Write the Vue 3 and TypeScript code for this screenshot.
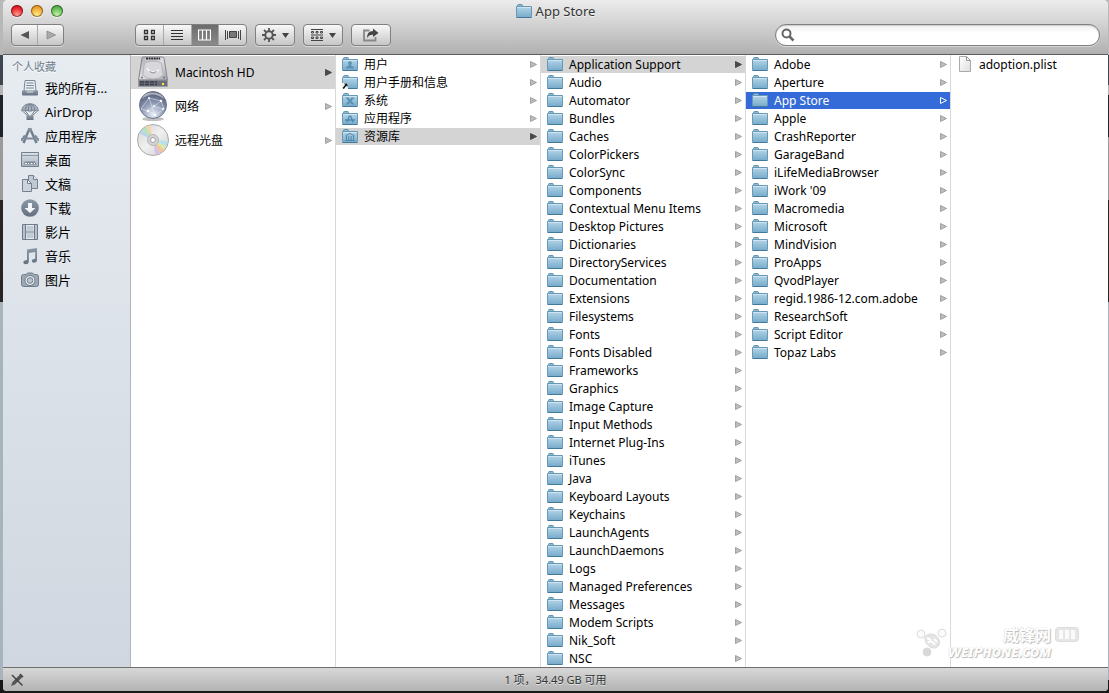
<script setup lang="ts">
import { ref } from 'vue'

interface Entry {
  name: string
  icon: string
  leaf?: boolean
}
interface Column {
  id: string
  large?: boolean
  selected?: string
  active?: boolean
  entries: Entry[]
}

const folders = (names: string[]): Entry[] => names.map((name) => ({ name, icon: 'folder' }))

const favourites: Entry[] = [
  { name: '我的所有…', icon: 'allfiles' },
  { name: 'AirDrop', icon: 'airdrop' },
  { name: '应用程序', icon: 'apps' },
  { name: '桌面', icon: 'desktop' },
  { name: '文稿', icon: 'documents' },
  { name: '下载', icon: 'downloads' },
  { name: '影片', icon: 'movies' },
  { name: '音乐', icon: 'music' },
  { name: '图片', icon: 'pictures' },
]

const columns = ref<Column[]>([
  {
    id: 'devices',
    large: true,
    selected: 'Macintosh HD',
    entries: [
      { name: 'Macintosh HD', icon: 'drive' },
      { name: '网络', icon: 'network' },
      { name: '远程光盘', icon: 'disc' },
    ],
  },
  {
    id: 'root',
    selected: '资源库',
    entries: [
      { name: '用户', icon: 'folder-user' },
      { name: '用户手册和信息', icon: 'folder-alias' },
      { name: '系统', icon: 'folder-system' },
      { name: '应用程序', icon: 'folder-apps' },
      { name: '资源库', icon: 'folder-library' },
    ],
  },
  {
    id: 'library',
    selected: 'Application Support',
    entries: folders([
      'Application Support', 'Audio', 'Automator', 'Bundles', 'Caches', 'ColorPickers', 'ColorSync',
      'Components', 'Contextual Menu Items', 'Desktop Pictures', 'Dictionaries', 'DirectoryServices',
      'Documentation', 'Extensions', 'Filesystems', 'Fonts', 'Fonts Disabled', 'Frameworks', 'Graphics',
      'Image Capture', 'Input Methods', 'Internet Plug-Ins', 'iTunes', 'Java', 'Keyboard Layouts',
      'Keychains', 'LaunchAgents', 'LaunchDaemons', 'Logs', 'Managed Preferences', 'Messages',
      'Modem Scripts', 'Nik_Soft', 'NSC',
    ]),
  },
  {
    id: 'support',
    selected: 'App Store',
    active: true,
    entries: folders([
      'Adobe', 'Aperture', 'App Store', 'Apple', 'CrashReporter', 'GarageBand', 'iLifeMediaBrowser',
      "iWork '09", 'Macromedia', 'Microsoft', 'MindVision', 'ProApps', 'QvodPlayer',
      'regid.1986-12.com.adobe', 'ResearchSoft', 'Script Editor', 'Topaz Labs',
    ]),
  },
  { id: 'store', entries: [{ name: 'adoption.plist', icon: 'file', leaf: true }] },
])

const query = ref('')
const select = (column: Column, entry: Entry) => {
  column.selected = entry.name
}
</script>

<template>
  <div class="screen">
    <svg class="defs" aria-hidden="true">
      <defs>
        <linearGradient id="g-folder" x1="0" y1="0" x2="0" y2="1">
          <stop offset="0" stop-color="#b4d5e7" /><stop offset="1" stop-color="#76aaca" />
        </linearGradient>
        <linearGradient id="g-side" x1="0" y1="0" x2="0" y2="1">
          <stop offset="0" stop-color="#8d98a6" /><stop offset="1" stop-color="#647080" />
        </linearGradient>
        <linearGradient id="g-pale" x1="0" y1="0" x2="0" y2="1">
          <stop offset="0" stop-color="#dbe1e8" /><stop offset="1" stop-color="#a9b3bf" />
        </linearGradient>
        <linearGradient id="g-metal" x1="0" y1="0" x2="1" y2="1">
          <stop offset="0" stop-color="#a9a9ae" /><stop offset="0.5" stop-color="#e0e0e4" /><stop offset="1" stop-color="#a2a2aa" />
        </linearGradient>
        <radialGradient id="g-globe" cx="0.5" cy="0.85" r="0.85">
          <stop offset="0" stop-color="#e4edf6" /><stop offset="0.5" stop-color="#8f9bb6" /><stop offset="1" stop-color="#4b526c" />
        </radialGradient>
        <linearGradient id="g-disc" x1="0" y1="0" x2="1" y2="1">
          <stop offset="0" stop-color="#d5d5d5" /><stop offset="0.5" stop-color="#f0f0f0" /><stop offset="1" stop-color="#cccccc" />
        </linearGradient>
        <linearGradient id="g-page" x1="0" y1="0" x2="1" y2="1">
          <stop offset="0" stop-color="#ffffff" /><stop offset="1" stop-color="#dedede" />
        </linearGradient>
      </defs>

      <symbol id="folder" viewBox="0 0 16 16">
        <path d="M1.5 4V2.5q0-1 1-1h3q1 0 1 1V4" fill="#8dbad3" stroke="#5f91b0" />
        <path d="M0.5 3.5h15v10q0 1-1 1h-13q-1 0-1-1z" fill="url(#g-folder)" stroke="#6798b5" />
        <path d="M1 4.5h14" stroke="#cfe6f2" />
        <path d="M0.5 14.5h15" stroke="#437a9a" />
      </symbol>
      <symbol id="folder-user" viewBox="0 0 16 16">
        <use href="#folder" />
        <path d="M8 5.2c1.4 0 2 1 1.8 2.3-.1.9-.5 1.4-.9 1.8.2 1 3.1.9 3.1 3.1H4c0-2.2 2.900-2.1 3.1-3.1-.4-.4-.8-.9-.9-1.8C6 6.200 6.600 5.200 8 5.200z" fill="#5a92b5" />
      </symbol>
      <symbol id="folder-alias" viewBox="0 0 16 16">
        <use href="#folder" />
        <path d="M0 9h6v6H0z" fill="#e8f2f7" />
        <path d="M2 9.500h3.500V13l-1.200-1.200L1.800 15 .6 14l2.600-3.200z" fill="#111" />
      </symbol>
      <symbol id="folder-system" viewBox="0 0 16 16">
        <use href="#folder" />
        <path d="M3.500 5.500h3L8 7.500l1.500-2h3L9.500 9l3 3.500h-3L8 10.500l-1.500 2h-3l3-3.500z" fill="#5a92b5" />
      </symbol>
      <symbol id="folder-apps" viewBox="0 0 16 16">
        <use href="#folder" />
        <path d="M7.500 5.500L5 12.500M8.500 5.500l2.500 7M3 10h10" fill="none" stroke="#5089ad" stroke-width="1.300" />
      </symbol>
      <symbol id="folder-library" viewBox="0 0 16 16">
        <use href="#folder" />
        <path d="M3.500 7.800L8 5.500l4.500 2.300M3 12.500h10M4.500 8v4M6.800 8v4M9.200 8v4M11.500 8v4" fill="none" stroke="#5089ad" />
      </symbol>
      <symbol id="file" viewBox="0 0 16 16">
        <path d="M2.500.5h7l4 4v11h-11z" fill="url(#g-page)" stroke="#aaaaaa" />
        <path d="M9.500.5v4h4z" fill="#f8f8f8" stroke="#979797" />
      </symbol>

      <symbol id="drive" viewBox="0 0 32 32">
        <path d="M5 2q.3-1 1.500-1h19q1.200 0 1.500 1l3.500 22H1.500z" fill="url(#g-metal)" stroke="#85858b" />
        <path d="M8 1.500h16v3H8z" fill="#c9c9cc" />
        <path d="M9 2.500h14" stroke="#303034" stroke-width="2" stroke-dasharray="2 .6" />
        <path d="M7.500 7q8.500-4 17 0l1.800 12q-4 4-10.300 4T5.700 19z" fill="#d7d7dc" stroke="#b2b2b8" />
        <path d="M10 12q3 7 12 2" fill="none" stroke="#f5f5f7" stroke-width="1.500" />
        <path d="M12.500 15.500q3.500 3 7 0" fill="none" stroke="#8c8c94" />
        <circle cx="5" cy="21.500" r="1" fill="#777" /><circle cx="27" cy="21.500" r="1" fill="#777" />
        <path d="M1.500 24h29v6.500h-29z" fill="#6a6c78" stroke="#9a9ca4" />
        <path d="M3 26h17M3 28.500h17" stroke="#3d3f4b" stroke-width="1.500" stroke-dasharray="4 1" />
        <circle cx="26" cy="28" r="1.200" fill="#ffe34a" />
      </symbol>
      <symbol id="network" viewBox="0 0 32 32">
        <ellipse cx="16" cy="29" rx="11" ry="2" fill="#000" opacity=".25" />
        <circle cx="16" cy="15" r="13.500" fill="url(#g-globe)" stroke="#6d758e" />
        <path d="M5 9q11-9 22 0-2-6-11-6.500T5 9z" fill="#fff" opacity=".5" />
        <path d="M4 19L12 8l12 3 3 8-9 6-7-4zM12 8l6 17M24 11L11 21M18 17l9 2" fill="none" stroke="#eef3fb" stroke-width=".5" />
        <g fill="#fff"><circle cx="12" cy="8" r="1" /><circle cx="24" cy="11" r="1.200" /><circle cx="11" cy="21" r="1.300" /><circle cx="18" cy="25" r="1.200" /><circle cx="17" cy="16" r="1" /><circle cx="26" cy="19" r="1" /></g>
      </symbol>
      <symbol id="disc" viewBox="0 0 32 32">
        <circle cx="16" cy="16" r="15.500" fill="url(#g-disc)" stroke="#a9a9a9" />
        <path d="M16 16L5 6l4-3.500z" fill="#b6e3bd" /><path d="M16 16L9 2.500l4-1.500z" fill="#f5d5a8" />
        <path d="M16 16L2.500 9.500 5 6z" fill="#b9d4ee" /><path d="M16 16l11 10-4 3.500z" fill="#f5c49b" />
        <path d="M16 16l13.500 6-2.500 4z" fill="#d8eaaa" /><path d="M16 16l15 1-1.500 5z" fill="#b8dfee" />
        <path d="M16 16l7 13.500-4.500 1.500z" fill="#d4c1ea" />
        <circle cx="16" cy="16" r="5.500" fill="#d5d5d7" stroke="#b5b5b8" />
        <circle cx="16" cy="16" r="2.500" fill="#fff" stroke="#a0a0a0" />
      </symbol>

      <symbol id="allfiles" viewBox="0 0 18 18">
        <path d="M4 1.500h10L15 12H3z" fill="#e9edf1" stroke="#7d8997" />
        <path d="M5.500 4h7M5.200 6.500h7.600M5 9h8" stroke="#7d8997" />
        <path d="M1 11.500h4l1 2h6l1-2h4v4q0 1-1 1H2q-1 0-1-1z" fill="url(#g-side)" />
      </symbol>
      <symbol id="airdrop" viewBox="0 0 18 18">
        <path d="M.8 8C.8 3 5 .8 9 .8S17.200 3 17.200 8q-1.500-1.500-3.200 0-2-1.500-3.300 0H7.300Q6 6.500 4 8 2.300 6.500.8 8z" fill="#a7b1bd" stroke="#758291" />
        <path d="M7.300 8Q7 3 9 1q2 2 1.700 7M4 8Q4 3 8 1M14 8q0-5-4-7M1.500 8L7 13M4.500 8L8 13M13.500 8L10 13M16.500 8L11 13" fill="none" stroke="#758291" />
        <path d="M5.500 12.500h7v4.500h-7z" fill="url(#g-side)" />
      </symbol>
      <symbol id="apps" viewBox="0 0 18 18">
        <path d="M8.500 1.500L2.500 16M9 1.500L15.500 16" fill="none" stroke="#737f8e" stroke-width="2.500" />
        <path d="M1 11.500h16M1 11v3M17 11v3M4 8.500l-2 2M14 8.500l2 2" fill="none" stroke="#7f8b99" stroke-width="1.800" />
        <circle cx="9" cy="2.500" r="1.800" fill="#8994a2" />
      </symbol>
      <symbol id="desktop" viewBox="0 0 18 18">
        <path d="M.5 1.500h17v14H.5z" fill="url(#g-pale)" stroke="#737f8d" />
        <path d="M.5 4.500h17" stroke="#8c97a4" />
        <path d="M2.500 13.500l1.500-3h10l1.500 3z" fill="#7c8795" />
        <path d="M4 12.500h2M7 12.500h1M9.500 12.500h2M13 12.500h1" stroke="#fff" />
      </symbol>
      <symbol id="documents" viewBox="0 0 18 18">
        <path d="M7.500.5h5l4 4v9h-9z" fill="#c0c8d1" stroke="#738090" />
        <path d="M12.500.5v4h4" fill="#e9eef4" stroke="#738090" />
        <path d="M1.500 4.500h5l4 4v8h-9z" fill="#ccd3dc" stroke="#738090" />
        <path d="M6.500 4.500v4h4z" fill="#eef2f5" stroke="#738090" />
      </symbol>
      <symbol id="downloads" viewBox="0 0 18 18">
        <circle cx="9" cy="9" r="8.800" fill="url(#g-side)" />
        <path d="M7 4h4v5h3.500L9 14 3.500 9H7z" fill="#f3f6f9" />
      </symbol>
      <symbol id="movies" viewBox="0 0 18 18">
        <path d="M1.500 1.500h15v15h-15z" fill="#e7ecf2" stroke="#6f7c8b" />
        <path d="M4.500 2v14M13.500 2v14M5 9h8" stroke="#6f7c8b" />
        <path d="M3 2.500V16M15 2.500V16" stroke="#6f7c8b" stroke-dasharray="1 1" stroke-width="1.500" />
        <path d="M5.500 3h7v5h-7zM5.500 10h7v5h-7z" fill="#c3cbd5" />
      </symbol>
      <symbol id="music" viewBox="0 0 18 18">
        <path d="M6 2.500L16 1v12q0 2.500-3 2.700-2.200 0-2.200-1.700 0-2 3.400-2.300V5L7.800 6v8.500q0 2.500-3 2.700-2.500 0-2.500-1.800 0-2 3.700-2.300z" fill="url(#g-side)" />
      </symbol>
      <symbol id="pictures" viewBox="0 0 18 18">
        <path d="M5 3.500L6.500 2h5L13 3.500h2.500q2 .2 2 2v8q0 2-2 2h-13q-2 0-2-2v-8q0-1.800 2-2z" fill="#9ca7b4" stroke="#717d8b" />
        <circle cx="9" cy="9.500" r="5" fill="#e5eaf0" stroke="#6f7b89" />
        <circle cx="9" cy="9.500" r="2.800" fill="#bcc5cf" stroke="#717d8b" />
      </symbol>
    </svg>

    <main class="window">
      <header class="header">
        <div class="titlebar">
          <div class="lights">
            <button class="light red" aria-label="关闭"></button>
            <button class="light amber" aria-label="最小化"></button>
            <button class="light green" aria-label="缩放"></button>
          </div>
          <h1 class="title"><svg class="icon16"><use href="#folder" /></svg>App Store</h1>
        </div>
        <div class="toolbar">
          <div class="group nav">
            <button aria-label="后退"><svg width="10" height="10"><path d="M9 1v8L.5 5z" fill="#555" /></svg></button>
            <button aria-label="前进"><svg width="10" height="10"><path d="M1 1v8L9.500 5z" fill="#aaa" stroke="#888" stroke-width=".8" /></svg></button>
          </div>
          <div class="group views">
            <button aria-label="图标">
              <svg width="12" height="12" fill="none" stroke="#333"><path d="M1.500 1.500h3v3h-3zM8.500 1.500h3v3h-3zM1.500 7.500h3v3h-3zM8.500 7.500h3v3h-3z" stroke-width="1.300" /></svg>
            </button>
            <button aria-label="列表">
              <svg width="12" height="12" stroke="#333"><path d="M0 1.500h12M0 4.500h12M0 7.500h12M0 10.500h12" /></svg>
            </button>
            <button class="on" aria-label="分栏" aria-pressed="true">
              <svg width="13" height="12" fill="none" stroke="#fff"><path d="M.5 1h12v10H.5zM4.500 1v10M8.500 1v10" stroke-width="1.200" /></svg>
            </button>
            <button aria-label="Cover Flow">
              <svg width="16" height="12"><path d="M4.500 2.500h7v6h-7z" fill="#777" stroke="#444" /><path d="M.5 1v10M2.500 2v8M13.500 2v8M15.500 1v10" stroke="#444" /></svg>
            </button>
          </div>
          <button class="tool" aria-label="操作">
            <svg width="14" height="14" viewBox="0 0 14 14"><g stroke="#555" fill="none"><circle cx="7" cy="7" r="3.700" stroke-width="2" /><path d="M7 0v3M7 11v3M0 7h3M11 7h3M2 2l2.200 2.200M9.800 9.800L12 12M12 2L9.800 4.200M4.200 9.800L2 12" stroke-width="1.800" /></g></svg>
            <svg width="7" height="5"><path d="M0 0h7L3.500 5z" fill="#444" /></svg>
          </button>
          <button class="tool" aria-label="排列">
            <svg width="12" height="12" fill="none" stroke="#444"><path d="M0 .5h12M0 6h12M0 11.500h12" /><path d="M.5 2.500h2v1.500h-2zM5 2.500h2v1.500H5zM9.500 2.500h2v1.500h-2zM.5 8h2v1.500h-2zM5 8h2v1.500H5zM9.500 8h2v1.500h-2z" /></svg>
            <svg width="7" height="5"><path d="M0 0h7L3.500 5z" fill="#444" /></svg>
          </button>
          <button class="tool" aria-label="共享">
            <svg width="16" height="14"><path d="M6.500 2.500H1v10h11.500V9" fill="none" stroke="#888" stroke-width="1.800" /><path d="M10 .5L15.500 5 10 9V6.700Q6 6.300 4 10 4 3.200 10 3z" fill="#444" /></svg>
          </button>
          <label class="search">
            <svg width="14" height="14"><circle cx="5.500" cy="5.500" r="4" fill="none" stroke="#666" stroke-width="2" /><path d="M8.500 8.500L12.500 12.500" stroke="#666" stroke-width="2.500" /></svg>
            <input v-model="query" type="text" aria-label="搜索" />
          </label>
        </div>
      </header>

      <div class="body">
        <nav class="sidebar">
          <h2>个人收藏</h2>
          <a v-for="item in favourites" :key="item.name" href="#" @click.prevent>
            <svg class="icon18"><use :href="'#' + item.icon" /></svg>{{ item.name }}
          </a>
        </nav>
        <ul v-for="column in columns" :key="column.id" class="column" :class="{ large: column.large, active: column.active }">
          <li v-for="entry in column.entries" :key="entry.name">
            <button class="row" :class="{ selected: column.selected === entry.name }" @click="select(column, entry)">
              <svg :class="column.large ? 'icon32' : 'icon16'"><use :href="'#' + entry.icon" /></svg>
              <span class="name">{{ entry.name }}</span>
              <svg v-if="!entry.leaf" class="arrow" width="7" height="7"><path d="M.5.5v6l6-3z" /></svg>
            </button>
          </li>
        </ul>
      </div>

      <footer class="status">
        <svg class="pencil" width="14" height="14">
          <path d="M1 13l1.500-4L10 1.500 12.500 4 5 11.500z" fill="#555" /><path d="M10 1l3 3" stroke="#444" stroke-width="1.500" />
          <path d="M2 2l10.500 10.500" stroke="#444" stroke-width="1.500" />
        </svg>
        <span>1 项，34.49 GB 可用</span>
      </footer>
    </main>

    <div class="watermark">
      <svg width="32" height="30" viewBox="0 0 32 30" fill="#fbfbfb" stroke="#dcdcdc">
        <circle cx="5" cy="6" r="4" /><circle cx="26" cy="5" r="4" /><circle cx="11" cy="24" r="4" fill="#d8d8d8" />
        <path d="M9 9q4-5 10-2 6 4 4 10-3 5-9 2-6-4-5-10z" fill="#e4e4e4" />
        <path d="M11 10l4 2M18 11l3 3M12 15q3-4 7 2" fill="none" stroke="#fff" stroke-width="2" />
      </svg>
      <div class="brand">
        <p class="cn">威锋网</p>
        <p class="en">WeiPhone.com</p>
      </div>
      <svg class="badge" width="24" height="15"><rect x=".5" y=".5" width="23" height="14" rx="3" fill="#e6e6e6" stroke="#dcdcdc" /><path d="M4 3h4v9H4zM10 3h4v9h-4zM16 3h4v9h-4z" fill="#fafafa" /></svg>
    </div>
  </div>
</template>

<style>
html,
body {
  margin: 0;
  overflow: hidden;
}
</style>

<style scoped>
.screen {
  box-sizing: border-box;
  position: relative;
  height: 100vh;
  padding: 0 1px 2px 3px;
  background: linear-gradient(#b8b8b8 0 55px, #3e4650 55px 85px, #b4b4b4 85px 95px, #20242a 95px 137px, #9a9a9a 137px 200px, #282624 200px 302px, #a8b4bc 302px 680px, #181818 680px);
  font: 12px/18px "Noto Sans", "Noto Sans CJK SC", sans-serif;
  color: #000;
}
.defs {
  position: absolute;
  width: 0;
  height: 0;
}
svg {
  display: block;
  flex: none;
}
button {
  padding: 0;
  border: 0;
  background: none;
  font: inherit;
  color: inherit;
}
h1,
h2,
p,
ul {
  margin: 0;
  padding: 0;
  font-weight: normal;
  list-style: none;
}
.icon16 {
  width: 16px;
  height: 16px;
}
.icon18 {
  width: 18px;
  height: 18px;
}
.icon32 {
  width: 32px;
  height: 32px;
}
.row .icon16,
.row .icon32 {
  margin-bottom: 1px;
}
.window {
  display: flex;
  flex-direction: column;
  height: 100%;
  overflow: hidden;
  border-radius: 5px 5px 4px 4px;
  background: #fff;
}
.header {
  border-bottom: 1px solid #5c5c5c;
  background: linear-gradient(#ececec, #d2d2d2 45%, #b0b0b0);
}
.titlebar {
  display: grid;
  grid-template-columns: 1fr auto 1fr;
  align-items: center;
  height: 22px;
}
.lights {
  display: flex;
  gap: 8px;
  padding-left: 8px;
}
.light {
  width: 12px;
  height: 12px;
  border-radius: 50%;
  box-shadow: inset 0 0 0 1px rgba(0, 0, 0, 0.4), 0 1px 0 #f4f4f4;
}
.red {
  background: radial-gradient(circle at 50% 80%, #ff9c90, #e8202a 60%, #b8101c);
}
.amber {
  background: radial-gradient(circle at 50% 80%, #ffec86, #efa42e 60%, #c97818);
}
.green {
  background: radial-gradient(circle at 50% 80%, #c4f2a4, #5fb850 60%, #358a34);
}
.title {
  display: flex;
  align-items: center;
  gap: 4px;
  font-size: 13px;
  color: #333;
  text-shadow: 0 1px 0 #f4f4f4;
}
.toolbar {
  display: flex;
  height: 22px;
  padding: 2px 8px 8px;
}
.group,
.tool,
.search {
  box-sizing: border-box;
  display: flex;
  border: 1px solid #808080;
  border-radius: 4px;
  background: linear-gradient(#f8f8f8, #c6c6c6);
  box-shadow: 0 1px 0 #d8d8d8;
}
.group button {
  display: flex;
  flex: 1;
  align-items: center;
  justify-content: center;
}
.group button + button {
  border-left: 1px solid #a8a8a8;
}
.nav {
  width: 53px;
}
.views {
  width: 112px;
  margin-left: 71px;
}
.views .on {
  background: linear-gradient(#6c6c6c, #8a8a8a);
}
.tool {
  align-items: center;
  justify-content: center;
  gap: 6px;
  width: 40px;
  margin-left: 8px;
}
.search {
  align-items: center;
  gap: 4px;
  width: 325px;
  margin-left: auto;
  padding: 0 5px;
  border-radius: 11px;
  background: linear-gradient(#f0f0f0, #fff 40%);
  box-shadow: inset 0 1px 1px #ccc, 0 1px 0 #d8d8d8;
}
.search input {
  flex: 1;
  min-width: 0;
  border: 0;
  outline: 0;
  background: none;
  font: inherit;
}
.body {
  display: flex;
  flex: 1;
  min-height: 0;
}
.sidebar {
  box-sizing: border-box;
  flex: none;
  width: 128px;
  padding-top: 3px;
  border-right: 1px solid #b4b4b4;
  background: linear-gradient(#e7ecf1, #d0d7e0);
}
.sidebar h2 {
  padding-left: 9px;
  font-size: 11px;
  color: #6e7d8c;
  text-shadow: 0 1px 0 #fff;
}
.sidebar a {
  display: flex;
  align-items: center;
  gap: 6px;
  height: 24px;
  padding-left: 18px;
  font-size: 13px;
  color: #000;
  text-decoration: none;
  white-space: nowrap;
}
.column {
  box-sizing: border-box;
  flex: none;
  width: 205px;
  padding-top: 1px;
  overflow: hidden;
  border-right: 1px solid #d9d9d9;
}
.column:last-child {
  flex: 1;
  border-right: 0;
}
.column li {
  padding-bottom: 1px;
}
.row {
  box-sizing: border-box;
  display: flex;
  align-items: center;
  gap: 6px;
  width: 100%;
  height: 17px;
  padding: 0 3px 0 6px;
  text-align: left;
  white-space: nowrap;
}
.large .row {
  height: 33px;
}
.name {
  flex: 1;
}
.selected {
  background: #d4d4d4;
}
.arrow {
  fill: #bcbcbc;
  stroke: #a2a2a2;
}
.selected .arrow {
  fill: #4a4a4a;
  stroke: #4a4a4a;
}
.active .selected {
  background: #356bd8;
  color: #fff;
}
.active .selected .arrow {
  fill: none;
  stroke: #fff;
}
.status {
  display: grid;
  grid-template-columns: 1fr auto 1fr;
  align-items: center;
  height: 23px;
  border-top: 1px solid #6e6e6e;
  background: linear-gradient(#d8d8d8, #b2b2b2);
  font-size: 11px;
  color: #333;
  text-shadow: 0 1px 0 #e4e4e4;
}
.pencil {
  margin-left: 7px;
}
.watermark {
  position: absolute;
  right: 30px;
  bottom: 34px;
  display: flex;
  align-items: center;
  color: #fff;
  text-shadow: 0 0 1px #bbb, 1px 1px 1px #bbb;
  pointer-events: none;
}
.cn {
  font-size: 16px;
  line-height: 16px;
  font-weight: bold;
  text-align: right;
}
.en {
  font: italic bold small-caps 15px/16px "Noto Sans", sans-serif;
}
.badge {
  align-self: flex-start;
  margin-left: 4px;
}
</style>
